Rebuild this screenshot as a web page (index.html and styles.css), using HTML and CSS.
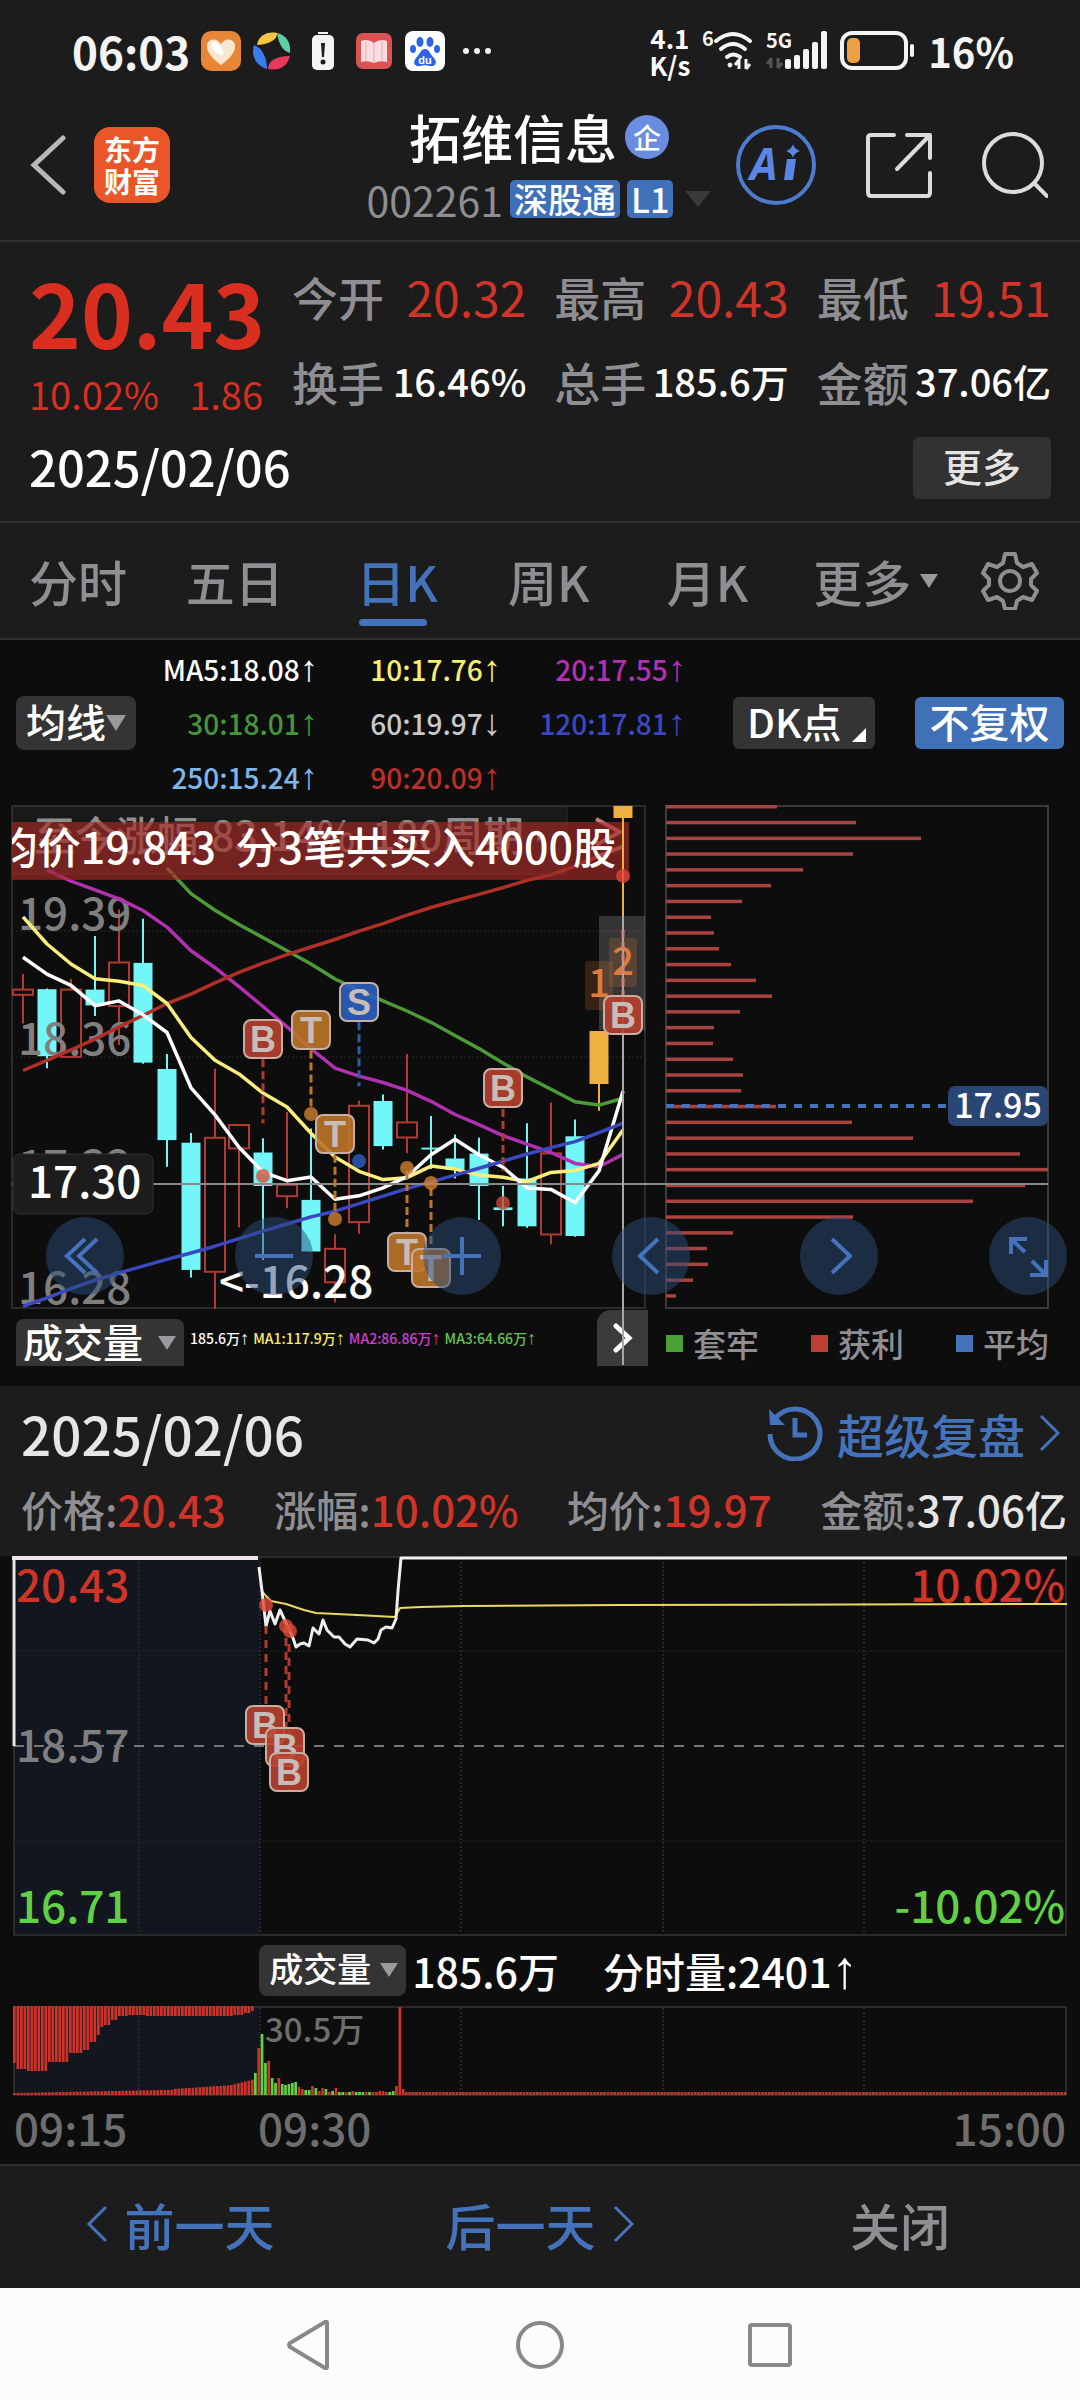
FILE: index.html
```
<!DOCTYPE html>
<html lang="zh-CN">

<head>
  <meta charset="utf-8">
  <meta name="viewport" content="width=device-width, initial-scale=1">
  <title>拓维信息 002261</title>
  <link rel="stylesheet" href="styles.css">
</head>

<body>
  <div class="status">
    <div class="status-side">
      <span class="clock">06:03</span>
      <svg class="app-icon" viewBox="0 0 40 40">
        <rect width="40" height="40" rx="10" fill="#e88638"/>
        <path d="M20 34C12 28 5 21 6 14c1-6 9-8 14-1 5-7 13-5 14 1 1 7-6 14-14 20z" fill="#fbe6d2"/>
        <path d="M11 11c4-1 9 4 11 9s-2 5-5 3-9-10-6-12z" fill="#fff"/>
      </svg>
      <svg class="app-icon" viewBox="0 0 40 40">
        <path d="M5 14C6 5 15 0 25 2c1 5-5 11-20 12z" fill="#f6c443"/>
        <path d="M25 2c9 2 14 9 13 20-7-2-11-8-13-20z" fill="#5fcfa4"/>
        <path d="M38 25c-3 11-11 15-22 13 0-8 8-13 22-13z" fill="#e8385c"/>
        <path d="M2 14c8 3 13 12 13 24C3 34-1 24 2 14z" fill="#3a7cf0"/>
      </svg>
      <svg class="app-icon" viewBox="0 0 40 40">
        <path d="M15 1h10v2H15z" fill="#f4f4f4"/>
        <rect x="9" y="4" width="22" height="35" rx="5" fill="#f4f4f4"/>
        <path d="M18 12h4l-1 14h-2z" fill="#1c1c1c"/>
        <circle cx="20" cy="31" r="2.500" fill="#1c1c1c"/>
      </svg>
      <svg class="app-icon" viewBox="0 0 40 40">
        <rect x="2" y="2" width="36" height="36" rx="7" fill="#dc5252"/>
        <path d="M7 10q7-3 13 2q6-5 13-2v21q-7-2-13 1q-6-3-13-1z" fill="#f8dde0"/>
        <path d="M20 12v20M12 10v20M28 10v20" stroke="#ecb9c2" stroke-width="1.500"/>
      </svg>
      <svg class="app-icon" viewBox="0 0 40 40">
        <rect width="40" height="40" rx="8" fill="#fff"/>
        <g fill="#2f62e8">
          <ellipse cx="15" cy="11" rx="3.500" ry="5"/>
          <ellipse cx="25" cy="11" rx="3.500" ry="5"/>
          <ellipse cx="8" cy="18" rx="3" ry="4"/>
          <ellipse cx="32" cy="18" rx="3" ry="4"/>
          <path d="M20 18c4 0 5 5 9 9 4 5 1 9-4 8-4-1-6-1-10 0-5 1-8-3-4-8 4-4 5-9 9-9z"/>
        </g>
        <text x="20" y="33" class="du">du</text>
      </svg>
      <svg class="dots" viewBox="0 0 30 8" fill="#f4f4f4"><circle cx="4" cy="4" r="3"/><circle cx="15" cy="4" r="3"/><circle cx="26" cy="4" r="3"/></svg>
    </div>
    <div class="status-side status-right">
      <span class="speed">4.1<br>K/s</span>
      <svg class="wifi" viewBox="0 0 52 42" fill="none" stroke="#f4f4f4">
        <text x="0" y="16" class="tiny">6</text>
        <g stroke-width="4" stroke-linecap="round">
          <path d="M14 11q17-14 34 0"/><path d="M19 19q12-10 24 0"/><path d="M25 27q6-5 13 0"/>
        </g>
        <circle cx="28" cy="35" r="2" fill="#f4f4f4"/>
        <path d="M37 29v10M33 35l4-5M44 29v10M48 34l-4 5" stroke-width="3"/>
      </svg>
      <svg class="signal" viewBox="0 0 62 42">
        <text x="0" y="18" class="tiny">5G</text>
        <path d="M5 28v10M1 34l4-5M12 28v10M16 33l-4 5" stroke="#555" stroke-width="3" fill="none"/>
        <g fill="#f4f4f4"><rect x="19" y="29" width="6" height="10" rx="2"/><rect x="28" y="25" width="6" height="14" rx="2"/><rect x="37" y="19" width="6" height="20" rx="2"/><rect x="46" y="12" width="6" height="27" rx="2"/><rect x="55" y="1" width="6" height="38" rx="2"/></g>
      </svg>
      <svg class="battery" viewBox="0 0 76 40">
        <rect x="2" y="2" width="64" height="35" rx="10" fill="none" stroke="#f4f4f4" stroke-width="4"/>
        <rect x="7" y="7" width="13" height="25" rx="5" fill="#eda044"/>
        <rect x="70" y="13" width="4" height="13" rx="2" fill="#f4f4f4"/>
      </svg>
      <span class="percent">16%</span>
    </div>
  </div>

  <header class="header">
    <div class="header-left">
      <button class="icon-btn" aria-label="返回">
        <svg class="back" viewBox="0 0 36 60"><path d="M33 3L4 30l29 27" fill="none" stroke="#b8b8b8" stroke-width="5" stroke-linecap="round"/></svg>
      </button>
      <a class="logo" href="#">东方<br>财富</a>
    </div>
    <div class="title">
      <h1>拓维信息<span class="corp">企</span></h1>
      <div class="code">002261<span class="tag">深股通</span><span class="tag">L1</span><span class="tri-dim"></span></div>
    </div>
    <div class="header-right">
      <button class="icon-btn" aria-label="AI">
        <svg class="ai" viewBox="0 0 80 80" fill="#5b86e5">
          <circle cx="40" cy="40" r="38" fill="none" stroke="#4c7bd0" stroke-width="4"/>
          <text x="14" y="55" class="ai-text">A</text>
          <path d="M51 34h9l-3 21h-9z"/>
          <path d="M57 19q1 5 7 7q-6 2-7 7q-1-5-7-7q6-2 7-7z"/>
        </svg>
      </button>
      <button class="icon-btn" aria-label="分享">
        <svg class="share" viewBox="0 0 66 66" fill="none" stroke="#dcdcdc" stroke-width="4" stroke-linecap="round" stroke-linejoin="round">
          <path d="M28 3H5q-3 0-3 3v54q0 4 3 4h56q3 0 3-4V41M41 3h23v23M63 4L31 37"/>
        </svg>
      </button>
      <button class="icon-btn" aria-label="搜索">
        <svg class="share" viewBox="0 0 66 66" fill="none" stroke="#dcdcdc" stroke-width="4" stroke-linecap="round">
          <circle cx="31" cy="31" r="29"/><path d="M53 52l12 12"/>
        </svg>
      </button>
    </div>
  </header>

  <section class="quote">
    <div class="quote-top">
      <div class="price">
        <strong>20.43</strong>
        <div class="change"><span>10.02%</span><span>1.86</span></div>
      </div>
      <dl class="stats">
        <div><dt>今开</dt><dd class="red">20.32</dd></div>
        <div><dt>最高</dt><dd class="red">20.43</dd></div>
        <div><dt>最低</dt><dd class="red">19.51</dd></div>
        <div><dt>换手</dt><dd>16.46%</dd></div>
        <div><dt>总手</dt><dd>185.6万</dd></div>
        <div><dt>金额</dt><dd>37.06亿</dd></div>
      </dl>
    </div>
    <div class="quote-date">
      <time>2025/02/06</time>
      <button class="more">更多</button>
    </div>
  </section>

  <nav class="tabs">
    <button>分时</button>
    <button>五日</button>
    <button class="active">日K</button>
    <button>周K</button>
    <button>月K</button>
    <button class="tab-more">更多<span class="tri tri-small"></span></button>
    <button aria-label="设置">
      <svg class="gear" viewBox="0 0 58 58" fill="none" stroke="#8e8e93" stroke-width="4" stroke-linejoin="round">
        <path d="M24 2h10l2 9l6 4l9-3l5 9l-6 6v6l6 6l-5 9l-9-3l-6 4l-2 8H24l-2-8l-6-4l-9 3l-5-9l6-6v-6l-6-6l5-9l9 3l6-4z"/>
        <circle cx="29" cy="29" r="10"/>
      </svg>
    </button>
  </nav>

  <section class="ma">
    <span class="drop">
      <select aria-label="均线"><option>均线</option></select><span class="tri"></span>
    </span>
    <div class="ma-grid">
      <span class="c-white">MA5:18.08<i>↑</i></span><span class="c-yellow">10:17.76<i>↑</i></span><span class="c-purple">20:17.55<i>↑</i></span>
      <span class="c-green">30:18.01<i>↑</i></span><span class="c-grey">60:19.97<i>↓</i></span><span class="c-blue">120:17.81<i>↑</i></span>
      <span class="c-sky">250:15.24<i>↑</i></span><span class="c-red">90:20.09<i>↑</i></span>
    </div>
    <button class="dk">DK点<span class="corner"></span></button>
    <button class="fq">不复权</button>
  </section>

  <section class="kline">
    <div class="kchart">
      <svg id="kline" viewBox="0 0 1080 505"></svg>
      <div class="controls">
        <button aria-label="最左"><svg viewBox="0 0 78 78"><path d="M39 22L21 39l18 17M51 22L33 39l18 17"/></svg></button>
        <button aria-label="缩小"><svg viewBox="0 0 78 78"><path d="M20 39h38"/></svg></button>
        <button aria-label="放大"><svg viewBox="0 0 78 78"><path d="M20 39h38M39 20v38"/></svg></button>
        <button aria-label="左移"><svg viewBox="0 0 78 78"><path d="M46 22L28 39l18 17"/></svg></button>
        <button aria-label="右移"><svg viewBox="0 0 78 78"><path d="M32 22l18 17l-18 17"/></svg></button>
        <button aria-label="全屏"><svg viewBox="0 0 78 78"><path d="M22 37V22h16M22 22l14 13M57 43v15H41M57 58L43 44"/></svg></button>
      </div>
    </div>
    <div class="sub">
      <div class="sub-left">
        <span class="drop drop-wide">
          <select aria-label="副图指标"><option>成交量</option></select><span class="tri tri-mid"></span>
        </span>
        <div class="sub-values">
          <span class="c-white">185.6万<i>↑</i></span><span class="c-yellow">MA1:117.9万<i>↑</i></span><span class="c-magenta">MA2:86.86万<i>↑</i></span><span class="c-lime">MA3:64.66万<i>↑</i></span>
        </div>
        <button class="next" aria-label="下一个"><svg viewBox="0 0 20 30"><path d="M3 3l13 12L3 27" fill="none" stroke="#fff" stroke-width="5" stroke-linecap="round"/></svg></button>
      </div>
      <div class="legend">
        <span><i class="sq sq-green"></i>套牢</span>
        <span><i class="sq sq-red"></i>获利</span>
        <span><i class="sq sq-blue"></i>平均</span>
      </div>
    </div>
  </section>

  <section class="day">
    <div class="day-top">
      <time>2025/02/06</time>
      <a class="replay" href="#">
        <svg class="history" viewBox="0 0 56 56" fill="none" stroke="#4573bb" stroke-width="5">
          <path d="M8 14A25 25 0 1 1 3 29"/>
          <path d="M28 13v17h12"/>
          <path d="M2 4l1 16h15z" fill="#4573bb" stroke="none"/>
        </svg>
        超级复盘
        <svg class="chev" viewBox="0 0 22 38"><path d="M2 2l17 17L2 36"/></svg>
      </a>
    </div>
    <div class="day-stats">
      <span>价格:<b class="red">20.43</b></span>
      <span>涨幅:<b class="red">10.02%</b></span>
      <span>均价:<b class="red">19.97</b></span>
      <span>金额:<b>37.06亿</b></span>
    </div>
  </section>

  <section class="minute">
    <svg id="minute" viewBox="0 0 1080 382"></svg>
    <div class="vol-head">
      <span class="drop drop-vol">
        <select aria-label="分时指标"><option>成交量</option></select><span class="tri tri-small"></span>
      </span>
      <span class="vol-total">185.6万</span>
      <span>分时量:2401<i>↑</i></span>
    </div>
    <svg id="volume" viewBox="0 0 1080 90"></svg>
    <div class="times"><span>09:15</span><span>09:30</span><span>15:00</span></div>
  </section>

  <footer class="footer">
    <button class="blue"><svg class="chev" viewBox="0 0 22 38"><path d="M20 2L3 19l17 17"/></svg>前一天</button>
    <button class="blue">后一天<svg class="chev" viewBox="0 0 22 38"><path d="M2 2l17 17L2 36"/></svg></button>
    <button>关闭</button>
  </footer>

  <div class="sysnav">
    <button aria-label="后退"><svg viewBox="0 0 50 50"><path d="M42 3v44q0 2-2 1L5 27q-2-2 0-4L40 2q2-1 2 1z"/></svg></button>
    <button aria-label="主页"><svg viewBox="0 0 50 50"><circle cx="25" cy="25" r="22"/></svg></button>
    <button aria-label="任务"><svg viewBox="0 0 50 50"><rect x="5" y="5" width="40" height="40" rx="2"/></svg></button>
  </div>

  <script src="chart.js"></script>
</body>

</html>
```
FILE: styles.css
```
* {
  box-sizing: border-box;
}

body {
  margin: 0;
  background: #0d0d0d;
  color: #fff;
  font-family: "Noto Sans CJK SC", sans-serif;
  font-weight: 500;
  line-height: 1;
}

button, select {
  margin: 0;
  padding: 0;
  border: 0;
  background: none;
  color: inherit;
  font: inherit;
}

svg {
  display: block;
}

i {
  font-family: "Liberation Sans", sans-serif;
  font-style: normal;
}

h1, dl, dd {
  margin: 0;
}

.red {
  color: #d03428;
}

/* status bar */
.status {
  display: flex;
  justify-content: space-between;
  align-items: center;
  height: 102px;
  padding: 0 66px 0 72px;
  background: #1c1c1c;
}

.status-side {
  display: flex;
  align-items: center;
  gap: 11px;
}

.status-right {
  gap: 12px;
}

.clock {
  font-size: 44px;
  font-weight: 700;
  color: #f4f4f4;
}

.percent {
  font-size: 40px;
  font-weight: 700;
  color: #f4f4f4;
}

.app-icon {
  width: 40px;
  height: 40px;
}

.dots {
  width: 30px;
  margin-left: 6px;
}

.du {
  font: bold 11px "Liberation Sans", sans-serif;
  text-anchor: middle;
  fill: #fff;
}

.speed {
  font-size: 26px;
  font-weight: 700;
  line-height: 27px;
  text-align: center;
}

.tiny {
  font-size: 20px;
  font-weight: 700;
  fill: #f4f4f4;
  stroke: none;
}

.wifi {
  width: 52px;
  overflow: visible;
}

.signal {
  width: 62px;
  overflow: visible;
}

.battery {
  width: 76px;
}

/* header */
.header {
  display: grid;
  grid-template-columns: 1fr auto 1fr;
  align-items: center;
  height: 140px;
  padding: 0 32px 12px 30px;
  background: #1c1c1c;
  border-bottom: 2px solid #303030;
}

.header-left {
  display: flex;
  align-items: center;
  gap: 28px;
}

.header-right {
  display: flex;
  justify-content: flex-end;
  align-items: center;
  gap: 50px;
}

.back {
  width: 36px;
}

.logo {
  width: 76px;
  height: 76px;
  padding-top: 6px;
  border-radius: 16px;
  background: #ea5529;
  color: #fff;
  font-size: 28px;
  font-weight: 700;
  line-height: 32px;
  text-align: center;
  text-decoration: none;
}

.title h1 {
  display: flex;
  justify-content: center;
  align-items: center;
  gap: 8px;
  margin-bottom: 16px;
  font-size: 52px;
  font-weight: 500;
}

.corp {
  width: 44px;
  border-radius: 50%;
  background: #6b8de0;
  font-size: 28px;
  line-height: 44px;
  text-align: center;
}

.code {
  display: flex;
  align-items: center;
  gap: 7px;
  color: #8e8e93;
  font-size: 41px;
  font-weight: 400;
}

.tag {
  padding: 0 4px;
  border-radius: 5px;
  background: #4070b8;
  color: #fff;
  font-size: 34px;
  font-weight: 500;
  line-height: 38px;
}

.tri-dim {
  margin-left: 5px;
  border: 13px solid transparent;
  border-top: 16px solid #3a3a3a;
  border-bottom: 0;
}

.ai {
  width: 80px;
}

.ai-text {
  font: italic bold 44px "Open Sans", sans-serif;
}

.share {
  width: 66px;
}

/* quote */
.quote {
  height: 281px;
  padding: 25px 29px 0;
  background: #1c1c1c;
  border-bottom: 2px solid #303030;
}

.quote-top {
  display: flex;
  gap: 29px;
}

.price {
  width: 234px;
  color: #d92e20;
}

.price strong {
  display: block;
  font-size: 88px;
  font-weight: 700;
}

.change {
  display: flex;
  justify-content: space-between;
  margin-top: 20px;
  font-size: 38px;
  font-weight: 400;
}

.stats {
  flex: 1;
  display: grid;
  grid-template-columns: repeat(3, 1fr);
  gap: 0 28px;
  align-content: start;
  white-space: nowrap;
}

.stats div {
  display: flex;
  justify-content: space-between;
  align-items: center;
  height: 85px;
  padding-bottom: 28px;
}

.stats dt {
  color: #8e8e93;
  font-size: 46px;
}

.stats dd {
  font-size: 38px;
}

.stats .red {
  font-size: 48px;
  font-weight: 400;
}

.quote-date {
  display: flex;
  justify-content: space-between;
  align-items: center;
  font-size: 49px;
}

.quote-date time {
  padding-bottom: 6px;
}

.more {
  width: 138px;
  height: 62px;
  padding-bottom: 6px;
  border-radius: 6px;
  background: #323232;
  color: #e4e4e4;
  font-size: 39px;
}

/* period tabs */
.tabs {
  display: grid;
  grid-template-columns: 157fr 171fr 152fr 159fr 147fr 168fr 56fr;
  justify-items: start;
  align-items: center;
  height: 117px;
  padding: 0 41px 0 29px;
  background: #1c1c1c;
  border-bottom: 2px solid #303030;
  color: #8e8e93;
  font-size: 49px;
}

.tabs .active {
  position: relative;
  color: #4573bb;
}

.tabs .active::after {
  content: "";
  position: absolute;
  left: 3px;
  bottom: -21px;
  width: 68px;
  height: 7px;
  border-radius: 4px;
  background: #4573bb;
}

.tab-more {
  display: flex;
  align-items: center;
}

.gear {
  width: 58px;
}

.tri {
  border: 10px solid transparent;
  border-top: 16px solid #9a9a9e;
  border-bottom: 0;
  pointer-events: none;
}

.tri-small {
  margin-left: 9px;
  border-width: 14px 9px 0;
}

/* moving averages */
.ma {
  display: flex;
  align-items: center;
  height: 165px;
  padding: 0 16px;
}

.drop {
  display: flex;
  align-items: center;
  width: 120px;
  height: 54px;
  padding-left: 10px;
  border-radius: 8px;
  background: #343434;
  font-size: 40px;
}

.drop select {
  appearance: none;
  height: 50px;
  padding-bottom: 4px;
}

.ma-grid {
  flex: 1;
  display: grid;
  grid-template-columns: 182px 183px 185px;
  grid-auto-rows: 54px;
  align-items: center;
  text-align: right;
  font-size: 28px;
}

i {
  font-size: 130%;
  line-height: 20px;
}

.c-white { color: #fff; }
.c-yellow { color: #fbee6e; }
.c-purple { color: #b42fb4; }
.c-green { color: #45963a; }
.c-grey { color: #c8c8c8; }
.c-blue { color: #3c48c0; }
.c-sky { color: #7db6ea; }
.c-red { color: #b83028; }
.c-magenta { color: #d03fd6; }
.c-lime { color: #66c455; }

.dk {
  display: flex;
  align-items: center;
  width: 142px;
  height: 52px;
  padding: 0 0 4px 14px;
  border-radius: 6px;
  background: #343434;
  font-size: 40px;
}

.corner {
  margin: 28px 0 0 10px;
  border-left: 14px solid transparent;
  border-bottom: 14px solid #fff;
}

.fq {
  width: 149px;
  height: 52px;
  margin-left: 40px;
  padding-bottom: 4px;
  border-radius: 6px;
  background: #4070b8;
  font-size: 40px;
}

/* daily K chart */
.kchart {
  position: relative;
}

.kchart > svg,
.minute > svg {
  width: 100%;
  overflow: visible;
}

.controls {
  position: absolute;
  left: 46px;
  right: 13px;
  bottom: 15px;
  display: flex;
  justify-content: space-between;
}

.controls button {
  border-radius: 50%;
  background: rgba(43, 75, 122, 0.5);
}

.controls svg {
  width: 78px;
  fill: none;
  stroke: #4573bb;
  stroke-width: 4;
}

.axis {
  font-size: 44px;
  fill: #7f7f7f;
}

.axis-small {
  font-size: 33px;
  fill: #6e6e6e;
}

.strong {
  fill: #fff;
}

.up {
  fill: #d03428;
}

.down {
  fill: #62d044;
}

.end {
  text-anchor: end;
}

.hint {
  font-size: 41px;
  fill: #8f8f8f;
}

.ticker {
  font-size: 43px;
  fill: #fff;
  text-anchor: end;
}

.avg {
  font-size: 34px;
  fill: #fff;
  text-anchor: middle;
}

.count {
  font-size: 38px;
  fill: #e27b38;
  text-anchor: middle;
}

.badge {
  font: bold 36px "Liberation Sans", sans-serif;
  fill: #c6bdb8;
  text-anchor: middle;
}

.sub {
  display: flex;
  height: 76px;
}

.sub-left {
  display: flex;
  align-items: center;
  width: 60%;
  height: 56px;
  padding-left: 16px;
}

.drop-wide {
  align-self: flex-end;
  width: 168px;
  height: 47px;
  border-radius: 8px 8px 0 0;
  padding-left: 7px;
}

.tri-mid {
  margin-left: 15px;
  border-width: 14px 9px 0;
}

.sub-values {
  flex: 1;
  display: flex;
  gap: 4px;
  padding-left: 6px;
  font-size: 14px;
  white-space: nowrap;
}

.next {
  display: flex;
  justify-content: center;
  align-items: center;
  width: 51px;
  height: 56px;
  border-radius: 14px 0 0;
  background: #3b3b3b;
}

.next svg {
  width: 20px;
}

.legend {
  flex: 1;
  display: flex;
  justify-content: space-between;
  align-items: center;
  height: 66px;
  padding: 0 31px 0 18px;
  color: #8e8e93;
  font-size: 33px;
}

.legend span {
  display: flex;
  align-items: center;
  gap: 10px;
}

.sq {
  width: 17px;
  height: 17px;
}

.sq-green { background: #4da035; }
.sq-red { background: #bd3f38; }
.sq-blue { background: #4573bb; }

/* selected day */
.day {
  height: 170px;
  padding: 18px 13px 0 21px;
  background: #1c1c1c;
}

.day-top,
.day-stats {
  display: flex;
  justify-content: space-between;
  align-items: center;
}

.day-top {
  height: 58px;
  padding-right: 6px;
  color: #e6e6e6;
  font-size: 53px;
}

.replay {
  display: flex;
  align-items: center;
  gap: 14px;
  color: #4573bb;
  font-size: 47px;
  text-decoration: none;
}

.history {
  width: 56px;
}

.chev {
  width: 22px;
  fill: none;
  stroke: #4573bb;
  stroke-width: 3;
}

.day-stats {
  margin-top: 26px;
  color: #8e8e93;
  font-size: 42px;
}

.day-stats b {
  color: #e6e6e6;
  font-weight: 500;
}

.day-stats .red {
  color: #d03428;
}

/* intraday chart */
.vol-head {
  display: flex;
  align-items: center;
  height: 68px;
  padding: 0 0 4px 24%;
  font-size: 41px;
}

.vol-total {
  margin: 0 44px 0 6px;
}

.drop-vol {
  width: 147px;
  height: 51px;
  font-size: 34px;
}

.times {
  display: grid;
  grid-template-columns: 244px 1fr auto;
  align-items: center;
  height: 68px;
  padding: 0 14px 6px;
  color: #6e6e6e;
  font-size: 44px;
}

/* footer */
.footer {
  display: grid;
  grid-template-columns: repeat(3, 1fr);
  height: 124px;
  padding-bottom: 6px;
  background: #1c1c1c;
  border-top: 2px solid #303030;
  color: #8e8e93;
  font-size: 50px;
}

.footer button {
  display: flex;
  justify-content: center;
  align-items: center;
  gap: 17px;
}

.footer .blue {
  color: #4573bb;
}

.sysnav {
  display: flex;
  justify-content: center;
  align-items: center;
  gap: 180px;
  height: 114px;
  background: #fcfcfc;
}

.sysnav svg {
  width: 50px;
  fill: none;
  stroke: #888;
  stroke-width: 4;
}
```
FILE: chart.js
```
var RED = '#b03a32';
var CYAN = '#72f6f8';
var GOLD = '#f0b040';

function rect(x, y, w, h, attrs) {
  return '<rect x="' + x + '" y="' + y + '" width="' + w + '" height="' + h + '" ' + (attrs || '') + '/>';
}

function line(x1, y1, x2, y2, color, width, dash) {
  return '<path d="M' + x1 + ' ' + y1 + 'L' + x2 + ' ' + y2 + '" stroke="' + color + '" stroke-width="' + width + '"' +
    (dash ? ' stroke-dasharray="' + dash + '"' : '') + '/>';
}

function poly(points, color, width) {
  return '<polyline points="' + points.join(' ') + '" fill="none" stroke="' + color + '" stroke-width="' + width + '" stroke-linejoin="round"/>';
}

function text(x, y, cls, str) {
  return '<text x="' + x + '" y="' + y + '" class="' + cls + '">' + str + '</text>';
}

function dot(x, y, color) {
  return '<circle cx="' + x + '" cy="' + y + '" r="7" fill="' + color + '" opacity="0.8"/>';
}

function badge(x, y, letter) {
  var fill = { B: '#b8402f', T: '#bd7628', S: '#2d5fc0' }[letter];
  return rect(x - 19, y - 19, 38, 38, 'rx="7" fill="' + fill + '" fill-opacity="0.9" stroke="#c9aea4" stroke-width="2"') +
    text(x, y + 13, 'badge', letter);
}

function kx(i) { return 23 + 24 * i; }
function ky(v) { return Math.round(v * 3.763 - 160) / 10; }

// type, high, body top, body bottom, low
var candles = [
  ['r', 492, 533, 547, 623], ['c', 530, 532, 710, 742], ['r', 505, 533, 712, 712], ['c', 391, 533, 575, 603],
  ['r', 320, 461, 577, 680], ['c', 345, 462, 727, 730], ['c', 704, 744, 933, 1004], ['c', 914, 940, 1278, 1298],
  ['r', 743, 927, 1283, 1382], ['r', 893, 893, 955, 1165], ['c', 928, 966, 1055, 1252], ['r', 858, 1052, 1082, 1114],
  ['c', 902, 1092, 1229, 1229], ['r', 1183, 1222, 1311, 1365], ['r', 828, 842, 1151, 1182], ['c', 812, 829, 949, 958],
  ['r', 704, 886, 926, 968], ['c', 869, 953, 958, 1010], ['c', 918, 982, 1012, 1035], ['c', 927, 969, 1055, 1145],
  ['c', 1055, 1112, 1119, 1162], ['c', 888, 1035, 1162, 1166], ['r', 833, 968, 1184, 1210], ['c', 878, 923, 1188, 1190],
  ['o', 643, 643, 784, 855], ['o', 45, 45, 77, 340]
];

// [first index, color, values...]
var averages = [
  [6, '#4c9a38', 210, 278, 322, 360, 395, 430, 465, 505, 535, 563, 590, 620, 655, 690, 728, 765, 798, 831, 840, 822],
  [1, '#b030b0', 215, 245, 268, 292, 323, 367, 430, 475, 525, 578, 632, 690, 742, 763, 780, 801, 830, 865, 892, 921, 944, 966, 995, 1004, 971],
  [0, '#b03028', 748, 721, 693, 665, 632, 602, 570, 545, 515, 487, 463, 440, 420, 400, 378, 358, 335, 315, 297, 280, 262, 243, 228, 205, 178, 152],
  [0, '#fbee7a', 340, 412, 465, 504, 511, 522, 570, 660, 721, 757, 808, 845, 915, 978, 1016, 1038, 1033, 1002, 1010, 1026, 1032, 1043, 1019, 1014, 995, 906],
  [0, '#ffffff', 447, 492, 522, 576, 563, 600, 647, 794, 866, 952, 1018, 1041, 1031, 1090, 1081, 1060, 1030, 972, 931, 972, 1005, 1060, 1064, 1099, 1015, 803],
  [0, '#3c48c0', 1375, 1352, 1328, 1305, 1286, 1268, 1250, 1233, 1215, 1195, 1175, 1156, 1137, 1122, 1102, 1082, 1062, 1044, 1026, 1008, 989, 970, 953, 937, 913, 888]
];

var chips = [111, 190, 255, 187, 137, 105, 76, 45, 48, 53, 65, 90, 106, 74, 48, 47, 67, 77, 75, 110, 186, 247, 354, 382, 359, 307, 187, 67, 41, 42, 27, 10];

function drawKline() {
  var s = '';
  s += '<clipPath id="plot"><rect x="12" y="0" width="634" height="504"/></clipPath>';
  s += rect(12, 1, 633, 502, 'fill="none" stroke="#2b2b2b" stroke-width="2"');
  s += line(12, 126, 645, 126, '#2b2b2b', 1, '2 2') + line(12, 252, 645, 252, '#2b2b2b', 1, '2 2');
  s += '<g clip-path="url(#plot)">';

  candles.forEach(function(c, i) {
    var x = kx(i);
    var top = ky(c[2]), bottom = ky(c[3]);
    var color = { r: RED, c: CYAN, o: GOLD }[c[0]];
    if (c[0] == 'r') {
      s += line(x, ky(c[1]), x, top, color, 2) + line(x, bottom, x, ky(c[4]), color, 2);
      s += rect(x - 10, top, 20, bottom - top, 'fill="none" stroke="' + color + '" stroke-width="2"');
    } else {
      s += line(x, ky(c[1]), x, ky(c[4]), color, 2);
      s += rect(x - 9.5, top, 19, bottom - top, 'fill="' + color + '"');
    }
  });

  s += text(18, 125, 'axis', '19.39') + text(18, 250, 'axis', '18.36');
  s += text(18, 377, 'axis', '17.32') + text(18, 499, 'axis', '16.28');

  averages.forEach(function(a) {
    s += poly(a.slice(2).map(function(v, i) {
      return kx(a[0] + i) + ',' + ky(v);
    }), a[1], 3.5);
  });

  // period gain hint, partly under the ticker
  s += rect(12, 1, 555, 68, 'fill="#fff" fill-opacity="0.05" stroke="#2f2f2f"');
  s += text(34, 46, 'hint', '至今涨幅') + text(211, 46, 'hint up', '83.14%') + text(372, 46, 'hint', '180周期');
  s += '<path d="M537 25l8 6l-8 6z" fill="#8f8f8f"/>';
  s += '<path d="M596 14l24 13l-24 13M596 52l26-10" fill="none" stroke="#c08080" stroke-width="4"/>';
  s += rect(12, 17, 617, 58, 'fill="#a82a26" fill-opacity="0.65"');
  s += '<text x="616" y="59" class="ticker" xml:space="preserve">均价19.843  分3笔共买入4000股</text>';
  s += '</g>';

  s += rect(599, 111, 46, 114, 'fill="#fff" fill-opacity="0.17"');
  s += rect(585, 156, 28, 49, 'rx="3" fill="#e27b38" fill-opacity="0.2"') + rect(609, 133, 28, 49, 'rx="3" fill="#e27b38" fill-opacity="0.2"');
  s += text(599, 192, 'count', '1') + text(623, 170, 'count', '2');

  // chip distribution
  s += rect(666, 1, 382, 502, 'fill="none" stroke="#3a3a3a" stroke-width="2"');
  chips.forEach(function(w, i) {
    s += rect(666, Math.round(i * 157.8) / 10, w, 3.5, 'fill="#a84440"');
  });
  s += line(666, 301, 948, 301, '#4573bb', 4, '8 8');
  s += rect(948, 281, 100, 40, 'rx="7" fill="#2a4674"') + text(998, 313, 'avg', '17.95');

  // cross hair
  s += line(12, 379, 1048, 379, '#8a8a8a', 2) + line(623, 2, 623, 560, '#a8a8a8', 2);
  s += line(623, 4, 623, 111, GOLD, 2);
  s += rect(13, 349, 140, 60, 'rx="7" fill="#1c1c1c" stroke="#333"') + text(28, 393, 'axis strong', '17.30');
  s += text(219, 493, 'axis strong', '&lt;-16.28');

  [[263, 718, 888, RED], [311, 695, 855, '#bd7628'], [359, 620, 790, '#2d5fa8'], [503, 850, 1015, RED],
   [335, 972, 1130, '#bd7628'], [407, 1015, 1175, '#bd7628'], [431, 1060, 1217, '#bd7628'], [623, 375, 550, '#d08080']].forEach(function(d) {
    s += line(d[0], ky(d[1]), d[0], ky(d[2]), d[3], 3, '8 4');
  });
  s += dot(263, 371, '#d8503c') + dot(311, 309, '#d08030') + dot(335, 414, '#d08030') + dot(359, 356, '#2d5fc0');
  s += dot(407, 363, '#d08030') + dot(431, 378, '#d08030') + dot(503, 398, '#c84838') + dot(623, 71, '#e04438');
  s += badge(263, 234, 'B') + badge(311, 225, 'T') + badge(335, 329, 'T') + badge(359, 197, 'S');
  s += badge(503, 283, 'B') + badge(407, 447, 'T') + badge(431, 463, 'T') + badge(623, 210, 'B');

  document.getElementById('kline').innerHTML = s;
}

function drawMinute() {
  var price = [[259, 11], [262, 35], [266, 70], [270, 55], [275, 68], [280, 54], [286, 67], [293, 82], [296, 91], [300, 88], [304, 87],
    [309, 90], [313, 72], [319, 78], [323, 64], [327, 74], [334, 81], [339, 81], [345, 88], [350, 91], [357, 83], [368, 84], [374, 87],
    [378, 83], [381, 74], [386, 71], [392, 72], [396, 63], [398, 35], [401, 2], [1067, 2]];
  var avg = [[262, 35], [266, 40], [271, 45], [286, 48], [304, 54], [316, 57], [357, 59], [395, 61], [400, 52], [421, 51], [464, 50], [620, 49], [1067, 48]];
  var s = '';
  s += rect(14, 1, 1052, 378, 'fill="none" stroke="#2b2b2b" stroke-width="2"');
  s += rect(15, 2, 245, 376, 'fill="#12171f"');
  [139, 260, 461, 663, 864].forEach(function(x) {
    s += line(x, 2, x, 379, '#262626', 2, '2 2');
  });
  s += line(14, 95, 1066, 95, '#262626', 1, '2 2') + line(14, 285, 1066, 285, '#262626', 1, '2 2');
  s += text(16, 206, 'axis', '18.57');
  s += line(14, 190, 1066, 190, '#777', 2, '10 10');
  s += line(12, 2, 258, 2, '#ece6ea', 4) + line(14, 0, 14, 190, '#e6e6e6', 3);
  s += poly(avg, '#e8da66', 2) + poly(price, '#eee', 3);
  s += text(16, 46, 'axis up', '20.43') + text(16, 367, 'axis down', '16.71');
  s += text(1065, 46, 'axis up end', '10.02%') + text(1065, 367, 'axis down end', '-10.02%');
  s += line(266, 70, 266, 150, RED, 3, '8 6') + line(286, 82, 286, 172, RED, 3, '8 6') + line(289, 88, 289, 196, RED, 3, '8 6');
  s += dot(266, 49, '#e04a38') + dot(286, 70, '#e04a38') + dot(290, 75, '#e04a38');
  s += badge(265, 169, 'B') + badge(285, 191, 'B') + badge(289, 216, 'B');
  document.getElementById('minute').innerHTML = s;
}

// x, depth of the auction bars
var auction = [[13, 57], [16, 63], [26, 65], [45, 60], [48, 56], [67, 47], [82, 44], [88, 36], [96, 29], [99, 21], [103, 19], [110, 14], [117, 10], [127, 9], [145, 10], [231, 9], [241, 7], [250, 5]];
var open = 'g22 r47 g61 g32 r34 g17 g12 r17 g11 g10 g11 g12 g13 r8 r6 g5 g5 r9 g7 r4 r7 g6 r3 g4 r7 g3 g3 r3 g3 r4 g3 g3 g3 r3 g3 r3 r3 r4 r4 r3 g3 g4 r9 r88 r6';

function drawVolume() {
  var s = '';
  var x, k = 0;
  s += rect(14, 1, 1052, 88, 'fill="none" stroke="#2b2b2b" stroke-width="2"');
  s += rect(15, 2, 245, 86, 'fill="#12171f"');
  [139, 260, 461, 663, 864].forEach(function(gx) {
    s += line(gx, 2, gx, 88, '#262626', 2, '2 2');
  });
  for (x = 13; x < 254; x += 3.5) {
    while (k < auction.length - 1 && auction[k + 1][0] <= x) k++;
    var low = x < 172 ? 2 + (x - 13) / 50 : x < 230 ? 6 + (x - 172) / 15 : 10 + (x - 230) / 4;
    s += rect(x, 0, 2.7, auction[k][1], 'fill="#cf3328"');
    s += rect(x, 89 - low, 2.7, low, 'fill="#cf3328"');
  }
  open.split(' ').forEach(function(b, i) {
    var h = +b.slice(1);
    s += rect(254 + Math.round(i * 33.6) / 10, 89 - h, 2.7, h, 'fill="' + (b[0] == 'r' ? '#cf3328' : '#62d044') + '"');
  });
  for (x = 405; x < 1066; x += 3.36) {
    s += rect(x.toFixed(1), 86, 2.7, 3, 'fill="#b83a32"');
  }
  s += text(265, 36, 'axis-small', '30.5万');
  document.getElementById('volume').innerHTML = s;
}

drawKline();
drawMinute();
drawVolume();
```
